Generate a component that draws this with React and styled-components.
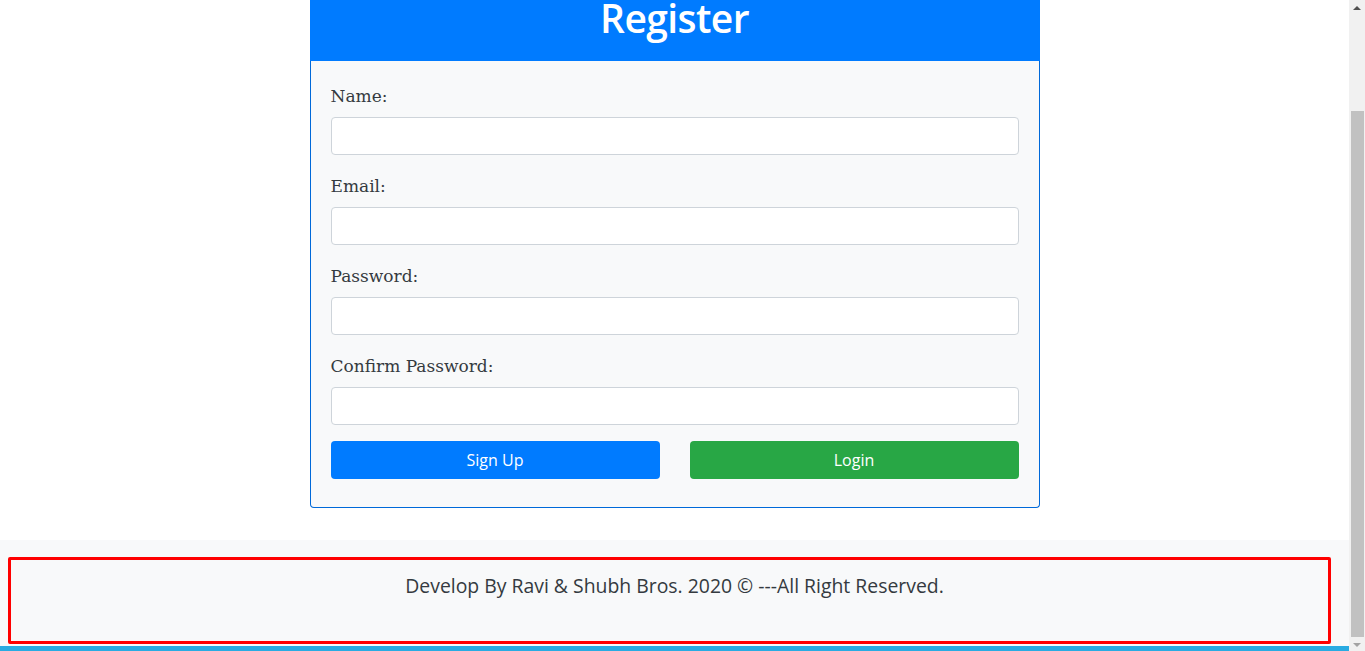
import styled, { createGlobalStyle } from "styled-components";

const GlobalStyle = createGlobalStyle`
  html, body {
    margin: 0;
    padding: 0;
    background: #ffffff;
    overflow: hidden;
  }
  * {
    box-sizing: border-box;
  }
`;

const Screen = styled.div`
  display: flex;
  width: 1365px;
  height: 651px;
  overflow: hidden;
`;

const Page = styled.div`
  flex: 1;
  display: flex;
  flex-direction: column;
  min-width: 0;
`;

const Card = styled.div`
  width: 730px;
  margin: 0 auto 32px;
  display: flex;
  flex-direction: column;
`;

const CardHeader = styled.div`
  height: 61px;
  background: #007bff;
  display: flex;
  justify-content: center;
  align-items: flex-start;
  overflow: hidden;

  h1 {
    margin: -2px 0 0;
    color: #ffffff;
    font-family: "Open Sans", sans-serif;
    font-weight: 600;
    font-size: 39px;
    letter-spacing: -0.6px;
    line-height: 40px;
  }
`;

const CardBody = styled.form`
  background: #f8f9fa;
  border: 1px solid #0069d9;
  border-top: none;
  border-radius: 0 0 4px 4px;
  padding: 22px 20px 28px;
  display: flex;
  flex-direction: column;
`;

const FieldGroup = styled.div`
  display: flex;
  flex-direction: column;
  margin-bottom: ${({ $last }) => ($last ? "16px" : "18px")};
`;

const Label = styled.label`
  font-family: "DejaVu Serif", serif;
  font-size: 17px;
  line-height: 26px;
  color: #343a40;
  margin-bottom: 8px;
`;

const Input = styled.input`
  height: 38px;
  width: 100%;
  border: 1px solid #ced4da;
  border-radius: 4px;
  background: #ffffff;
  padding: 6px 12px;
  font-size: 16px;
  outline: none;
`;

const ButtonRow = styled.div`
  display: grid;
  grid-template-columns: 1fr 1fr;
  gap: 30px;
`;

const Button = styled.button`
  height: 38px;
  border: none;
  border-radius: 4px;
  background: ${({ $variant }) => ($variant === "success" ? "#28a745" : "#007bff")};
  color: #ffffff;
  font-family: "Open Sans", sans-serif;
  font-size: 16px;
  cursor: pointer;
`;

const Footer = styled.footer`
  position: relative;
  height: 106px;
  background: #f8f9fa;
  padding-top: 31px;
  text-align: center;
  font-family: "Open Sans", sans-serif;
  font-size: 19.4px;
  line-height: 30px;
  color: #343a40;
`;

const Highlight = styled.div`
  position: absolute;
  left: 8px;
  top: 17px;
  width: 1323px;
  height: 87px;
  border: 3px solid #ff0000;
  border-radius: 2px;
  pointer-events: none;
`;

const BottomBar = styled.div`
  height: 5px;
  background: #29abe2;
`;

const Scrollbar = styled.div`
  width: 16px;
  background: #f1f1f1;
  display: flex;
  flex-direction: column;
  align-items: center;
`;

const Arrow = styled.div`
  width: 0;
  height: 0;
  border-left: 4px solid transparent;
  border-right: 4px solid transparent;
  ${({ $down }) =>
    $down
      ? "border-top: 4px solid #a3a3a3; margin: 5px 0 4px;"
      : "border-bottom: 4px solid #505050; margin: 6px 0 0;"}
`;

const Track = styled.div`
  flex: 1;
  width: 100%;
  padding: 101px 1px 1px 2px;
  display: flex;
`;

const Thumb = styled.div`
  flex: 1;
  background: #c1c1c1;
`;

const fields = ["Name:", "Email:", "Password:", "Confirm Password:"];

export default function App() {
  return (
    <Screen>
      <GlobalStyle />
      <Page>
        <Card>
          <CardHeader>
            <h1>Register</h1>
          </CardHeader>
          <CardBody onSubmit={(e) => e.preventDefault()}>
            {fields.map((label, i) => (
              <FieldGroup key={label} $last={i === fields.length - 1}>
                <Label>{label}</Label>
                <Input type={label.includes("Password") ? "password" : "text"} />
              </FieldGroup>
            ))}
            <ButtonRow>
              <Button type="submit">Sign Up</Button>
              <Button type="button" $variant="success">
                Login
              </Button>
            </ButtonRow>
          </CardBody>
        </Card>
        <Footer>
          Develop By Ravi &amp; Shubh Bros. 2020 © ---All Right Reserved.
          <Highlight />
        </Footer>
        <BottomBar />
      </Page>
      <Scrollbar>
        <Arrow />
        <Track>
          <Thumb />
        </Track>
        <Arrow $down />
      </Scrollbar>
    </Screen>
  );
}
